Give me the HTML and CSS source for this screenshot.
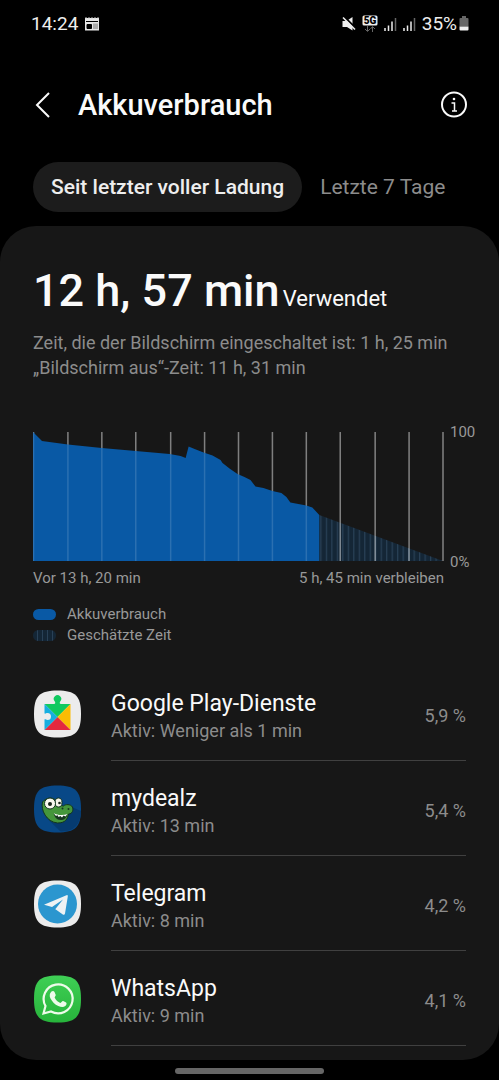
FILE: index.html
```html
<!DOCTYPE html>
<html lang="de">
<head>
    <meta charset="utf-8">
    <meta name="viewport" content="width=device-width, initial-scale=1.0">
    <title>Akkuverbrauch</title>
    <link rel="stylesheet" href="styles.css">
</head>
<body>
    <div class="status-bar">
        <div class="status-left">
            <span>14:24</span>
            <svg width="16" height="14" viewBox="0 0 16 14">
                <path d="M1 1h14v12.500H1z" fill="#e6e6e6"/>
                <path d="M2 0v1.500M5 0v1.500M8 0v1.500M11 0v1.500M14 0v1.500" stroke="#bbb"/>
                <path d="M2 4.500h12M3 7.500h4.500v4H3z" stroke="#000" fill="#000"/>
                <path d="M9 6.500h5V12H9z" fill="#aaa"/>
            </svg>
        </div>
        <div class="status-right">
            <svg width="14" height="16" viewBox="0 0 14 16">
                <path d="M0.500 5h4L10.500 1v13.500L5 11H0.500z" fill="#eee"/>
                <path d="M2 0.500L14 12.500" stroke="#000" stroke-width="2"/>
                <path d="M1 1.500L13 13.500" stroke="#eee" stroke-width="1.600"/>
            </svg>
            <svg class="net-icon" width="16" height="18" viewBox="0 0 16 18">
                <rect x="0.500" y="0.500" width="15" height="10" rx="1.500" fill="#eee"/>
                <text x="8" y="9" text-anchor="middle" class="net-text">5G</text>
                <path d="M5.500 11v5M3 14l2.500 2.500L8 14M10.500 17v-5M8.500 14l2-2.500 2.500 2.500" stroke="#666" fill="none"/>
            </svg>
            <svg width="13" height="14" viewBox="0 0 13 14">
                <path d="M1 11v3M4.500 8.500V14M8 4.500V14" stroke="#eee" stroke-width="1.500"/>
                <path d="M11.500 1v13" stroke="#666" stroke-width="1.500"/>
            </svg>
            <svg width="13" height="14" viewBox="0 0 13 14">
                <path d="M1 11v3M4.500 8.500V14M8 4.500V14" stroke="#eee" stroke-width="1.500"/>
                <path d="M11.500 1v13" stroke="#666" stroke-width="1.500"/>
            </svg>
            <span class="battery">35%
                <svg width="10" height="15" viewBox="0 0 10 15">
                    <path d="M3 0h4v2h1.500q1 0 1 1v7.500h-9V3q0-1 1-1H3z" fill="#666"/>
                    <path d="M0.500 10.500h9V13.500q0 1-1 1h-7q-1 0-1-1z" fill="#eee"/>
                </svg>
            </span>
        </div>
    </div>

    <header class="header">
        <button type="button" class="icon-button" aria-label="Zurück">
            <svg width="28" height="28" viewBox="0 0 28 28">
                <path d="M21 2L9 14 21 26" stroke="#fafafa" stroke-width="2" fill="none"/>
            </svg>
        </button>
        <h1>Akkuverbrauch</h1>
        <button type="button" class="icon-button" aria-label="Info">
            <svg width="28" height="28" viewBox="0 0 28 28">
                <circle cx="14" cy="13.500" r="12" stroke="#fafafa" stroke-width="2" fill="none"/>
                <circle cx="14" cy="8" r="1.300" fill="#fafafa"/>
                <path d="M11.500 12H14.500V20M12 20h5" stroke="#fafafa" stroke-width="1.500" fill="none"/>
            </svg>
        </button>
    </header>

    <nav class="tabs">
        <button type="button" class="tab active">Seit letzter voller Ladung</button>
        <button type="button" class="tab">Letzte 7 Tage</button>
    </nav>

    <main class="panel">
        <section class="summary">
            <h2>12 h, 57 min <span class="used">Verwendet</span></h2>
            <p>Zeit, die der Bildschirm eingeschaltet ist: 1 h, 25 min</p>
            <p>„Bildschirm aus“-Zeit: 11 h, 31 min</p>
        </section>

        <section class="chart">
            <svg class="plot" viewBox="0 0 412 130" preserveAspectRatio="none">
                <defs>
                    <pattern id="stripes" x="288" width="5.500" height="130" patternUnits="userSpaceOnUse">
                        <rect width="5.500" height="130" fill="#142636"/>
                        <rect width="1.200" height="130" fill="#294157"/>
                    </pattern>
                    <path id="hours" d="M.5 0V129M35 0V129M69 0V129M103 0V129M138 0V129M172 0V129M206 0V129M240 0V129M274 0V129M308 0V129M343 0V129M377 0V129M411 0V129"/>
                </defs>
                <path d="M287 83L411 129H287z" fill="url(#stripes)"/>
                <use href="#hours" class="grid-lines"/>
                <path d="M0 0L3 3 9 9 35 12.500 69 16 103 19 137 22 148 24 153 26 156 14.500 162 17 171 20.500 180 23.500 188 28 190 31 197 36.500 205 42 212 45 218 48 223 54.500 231 56 240 59 249 61 254 65 258 70.500 274 73.500 280 75.500 287 83V129H0z" fill="#0959a5"/>
                <use href="#hours" class="grid-lines faint"/>
            </svg>
            <div class="scale">
                <span>100</span>
                <span>0%</span>
            </div>
            <div class="times">
                <span>Vor 13 h, 20 min</span>
                <span>5 h, 45 min verbleiben</span>
            </div>
        </section>

        <ul class="legend">
            <li><span class="swatch"></span>Akkuverbrauch</li>
            <li><span class="swatch estimated"></span>Geschätzte Zeit</li>
        </ul>

        <ul class="apps">
            <li class="app">
                <svg class="app-icon" viewBox="0 0 48 48">
                    <path d="M24 .5C6 .5.500 6 .5 24S6 47.500 24 47.500 47.500 42 47.500 24 42 .5 24 .5z" fill="#ececec"/>
                    <path d="M11 14h9.500c1.500 0 1.500-1.500.8-2.500a3.700 3.700 0 1 1 5.400 0c-.7 1-.7 2.500.8 2.500H37L24 27z" fill="#0fc95f"/>
                    <path d="M37 14v26L24 27z" fill="#fbbc04"/>
                    <path d="M37 40H11l13-13z" fill="#e3293f"/>
                    <path d="M11 14v9.500c1 .5 1.500-.5 3-.5a3.500 3.500 0 0 1 0 7c-1.500 0-2-1-3-.5V40l13-13z" fill="#16aee0"/>
                </svg>
                <div class="app-body">
                    <div class="app-text">
                        <h3>Google Play-Dienste</h3>
                        <p>Aktiv: Weniger als 1 min</p>
                    </div>
                    <span class="percent">5,9 %</span>
                </div>
            </li>
            <li class="app">
                <svg class="app-icon" viewBox="0 0 48 48">
                    <path d="M24 .5C6 .5.500 6 .5 24S6 47.500 24 47.500 47.500 42 47.500 24 42 .5 24 .5z" fill="#084887"/>
                    <path d="M12 32L27 46.500Q47 47 47.500 26L38 22z" fill="#063b70"/>
                    <path d="M9 17C7 25 13 37 24 38c8 0 10-4 11-9 4 0 5-4 4-7-2-3-7-3-9-1-3 0-5-2-7-5-3-4-10-4-14 1z" fill="#45963b" stroke="#12351e"/>
                    <path d="M20 28c2 3 7 4 14 1-1 4-3 6-7 6s-6-3-7-7z" fill="#173720"/>
                    <path d="M20 28l2.500 3 1.500-1 1 2 2-1 1.500 1.500 1.500-2 2 1 2-2.500c-4 1.500-10 1.500-14-1z" fill="#fff"/>
                    <ellipse cx="25" cy="17.500" rx="3.500" ry="4.500" fill="#f4f4e8" stroke="#12351e"/>
                    <circle cx="16.500" cy="18.500" r="5.500" fill="#f8f8ee" stroke="#12351e"/>
                    <circle cx="16.500" cy="19" r="2" fill="#18251a"/>
                    <circle cx="26" cy="18" r="1.300" fill="#18251a"/>
                    <circle cx="29" cy="23.500" r="1" fill="#173720"/>
                    <circle cx="35" cy="24" r="1" fill="#173720"/>
                </svg>
                <div class="app-body">
                    <div class="app-text">
                        <h3>mydealz</h3>
                        <p>Aktiv: 13 min</p>
                    </div>
                    <span class="percent">5,4 %</span>
                </div>
            </li>
            <li class="app">
                <svg class="app-icon" viewBox="0 0 48 48">
                    <path d="M24 .5C6 .5.500 6 .5 24S6 47.500 24 47.500 47.500 42 47.500 24 42 .5 24 .5z" fill="#ececec"/>
                    <circle cx="24" cy="24" r="19.500" fill="#2b96cf"/>
                    <path d="M11 24.500L33 15.200q1.500-.4 1.300 1.300L31.500 33.500q-.5 2-2.200 1L22 29.200l-.5.300L29.500 19.500 18.500 27l-7-2q-1.500-.2-.5-.5z" fill="#eef2f4"/>
                </svg>
                <div class="app-body">
                    <div class="app-text">
                        <h3>Telegram</h3>
                        <p>Aktiv: 8 min</p>
                    </div>
                    <span class="percent">4,2 %</span>
                </div>
            </li>
            <li class="app">
                <svg class="app-icon" viewBox="0 0 48 48">
                    <defs>
                        <linearGradient id="green" x2="0" y2="1">
                            <stop stop-color="#3fcf55"/>
                            <stop offset="1" stop-color="#27b43b"/>
                        </linearGradient>
                    </defs>
                    <path d="M24 .5C6 .5.500 6 .5 24S6 47.500 24 47.500 47.500 42 47.500 24 42 .5 24 .5z" fill="url(#green)"/>
                    <path d="M10 38.500l2-7.500A14.500 14.500 0 1 1 17.500 36.500z" fill="none" stroke="#eefbea" stroke-width="2.200"/>
                    <path d="M18 16.500c1-1 2.500-.7 3 .4l1.200 2.800c.5 1-1.400 2.300-1 3 1.300 2.500 3.200 4.200 5.600 5.200.8.300 1.800-2.300 2.900-1.800l2.900 1.500c1 .6.300 2.700-.8 3.500-2 1.600-4.400 1.100-7-.1-3.500-1.500-6-4.200-7.800-7.500-1.300-2.500-1-5 1-7z" fill="#eefbea"/>
                </svg>
                <div class="app-body">
                    <div class="app-text">
                        <h3>WhatsApp</h3>
                        <p>Aktiv: 9 min</p>
                    </div>
                    <span class="percent">4,1 %</span>
                </div>
            </li>
        </ul>
    </main>

    <div class="home-bar"></div>
</body>
</html>
```
FILE: styles.css
```css
* {
    box-sizing: border-box;
}

body {
    font-family: Roboto, "Noto Sans", sans-serif;
    margin: 0;
    background-color: #000;
    color: #fafafa;
}

h1, h2, h3, p, ul {
    margin: 0;
    padding: 0;
}

ul {
    list-style: none;
}

svg {
    display: block;
    flex: none;
}

button {
    font-family: inherit;
    color: inherit;
    background: none;
    border: none;
    padding: 0;
    cursor: pointer;
}

.status-bar {
    display: flex;
    justify-content: space-between;
    align-items: center;
    height: 47px;
    padding: 0 30px 0 31px;
    font-size: 19px;
    color: #eee;
}

.status-left, .status-right, .battery {
    display: flex;
    align-items: center;
}

.status-left {
    gap: 6px;
}

.status-right {
    gap: 6px;
}

.net-text {
    font-size: 10px;
    font-weight: 900;
    fill: #000;
}

.battery {
    gap: 2px;
}

.header {
    display: flex;
    align-items: center;
    height: 115px;
    padding: 0 31px 0 28px;
}

.header h1 {
    flex: 1;
    margin-left: 22px;
    font-size: 29px;
    line-height: 36px;
    font-weight: 500;
}

.tabs {
    display: flex;
    height: 50px;
    padding: 0 33px;
}

.tab {
    padding: 0 18px;
    border-radius: 25px;
    font-size: 21px;
    color: #8c8c8c;
}

.tab.active {
    background-color: #1c1c1c;
    color: #eee;
    font-weight: 500;
}

.panel {
    margin-top: 14px;
    padding: 38px 33px 14px;
    border-radius: 36px;
    background-color: #171717;
}

.summary h2 {
    font-size: 45px;
    line-height: 54px;
    font-weight: 500;
    margin-bottom: 4px;
}

.summary .used {
    margin-left: -8px;
    font-size: 22px;
    font-weight: 400;
}

.summary p {
    font-size: 18px;
    line-height: 25px;
    color: #8c8c8c;
}

.chart {
    display: grid;
    grid-template-columns: 1fr 22px;
    margin-top: 52px;
    font-size: 15px;
    line-height: 20px;
    color: #999;
}

.plot {
    width: 100%;
    height: 130px;
}

.grid-lines {
    stroke: #fff;
    stroke-opacity: 0.36;
    stroke-width: 1.5;
}

.grid-lines.faint {
    stroke-opacity: 0.14;
}

.scale {
    display: flex;
    flex-direction: column;
    justify-content: space-between;
    margin: -10px 0 -10px 6px;
}

.times {
    display: flex;
    justify-content: space-between;
    margin-top: 6px;
}

.legend {
    margin-top: 16px;
    font-size: 15px;
    line-height: 21px;
    color: #999;
}

.legend li {
    display: flex;
    align-items: center;
    gap: 11px;
}

.swatch {
    width: 23px;
    height: 11px;
    border-radius: 6px;
    background-color: #0959a5;
}

.swatch.estimated {
    background: repeating-linear-gradient(90deg, #142636 0 4px, #294157 4px 5px);
}

.apps {
    margin-top: 20px;
}

.app {
    display: flex;
    align-items: center;
    gap: 29px;
}

.app-icon {
    width: 49px;
    height: 48px;
}

.app-body {
    display: flex;
    flex: 1;
    align-items: center;
    justify-content: space-between;
    height: 95px;
    padding-top: 6px;
    border-bottom: 1px solid #404040;
}

.app h3 {
    font-size: 23px;
    line-height: 30px;
    font-weight: 400;
}

.app p, .percent {
    font-size: 18px;
    line-height: 24px;
    color: #8c8c8c;
}

.home-bar {
    width: 30%;
    height: 6px;
    margin: 8px auto 0;
    border-radius: 3px;
    background-color: #666;
}
```
